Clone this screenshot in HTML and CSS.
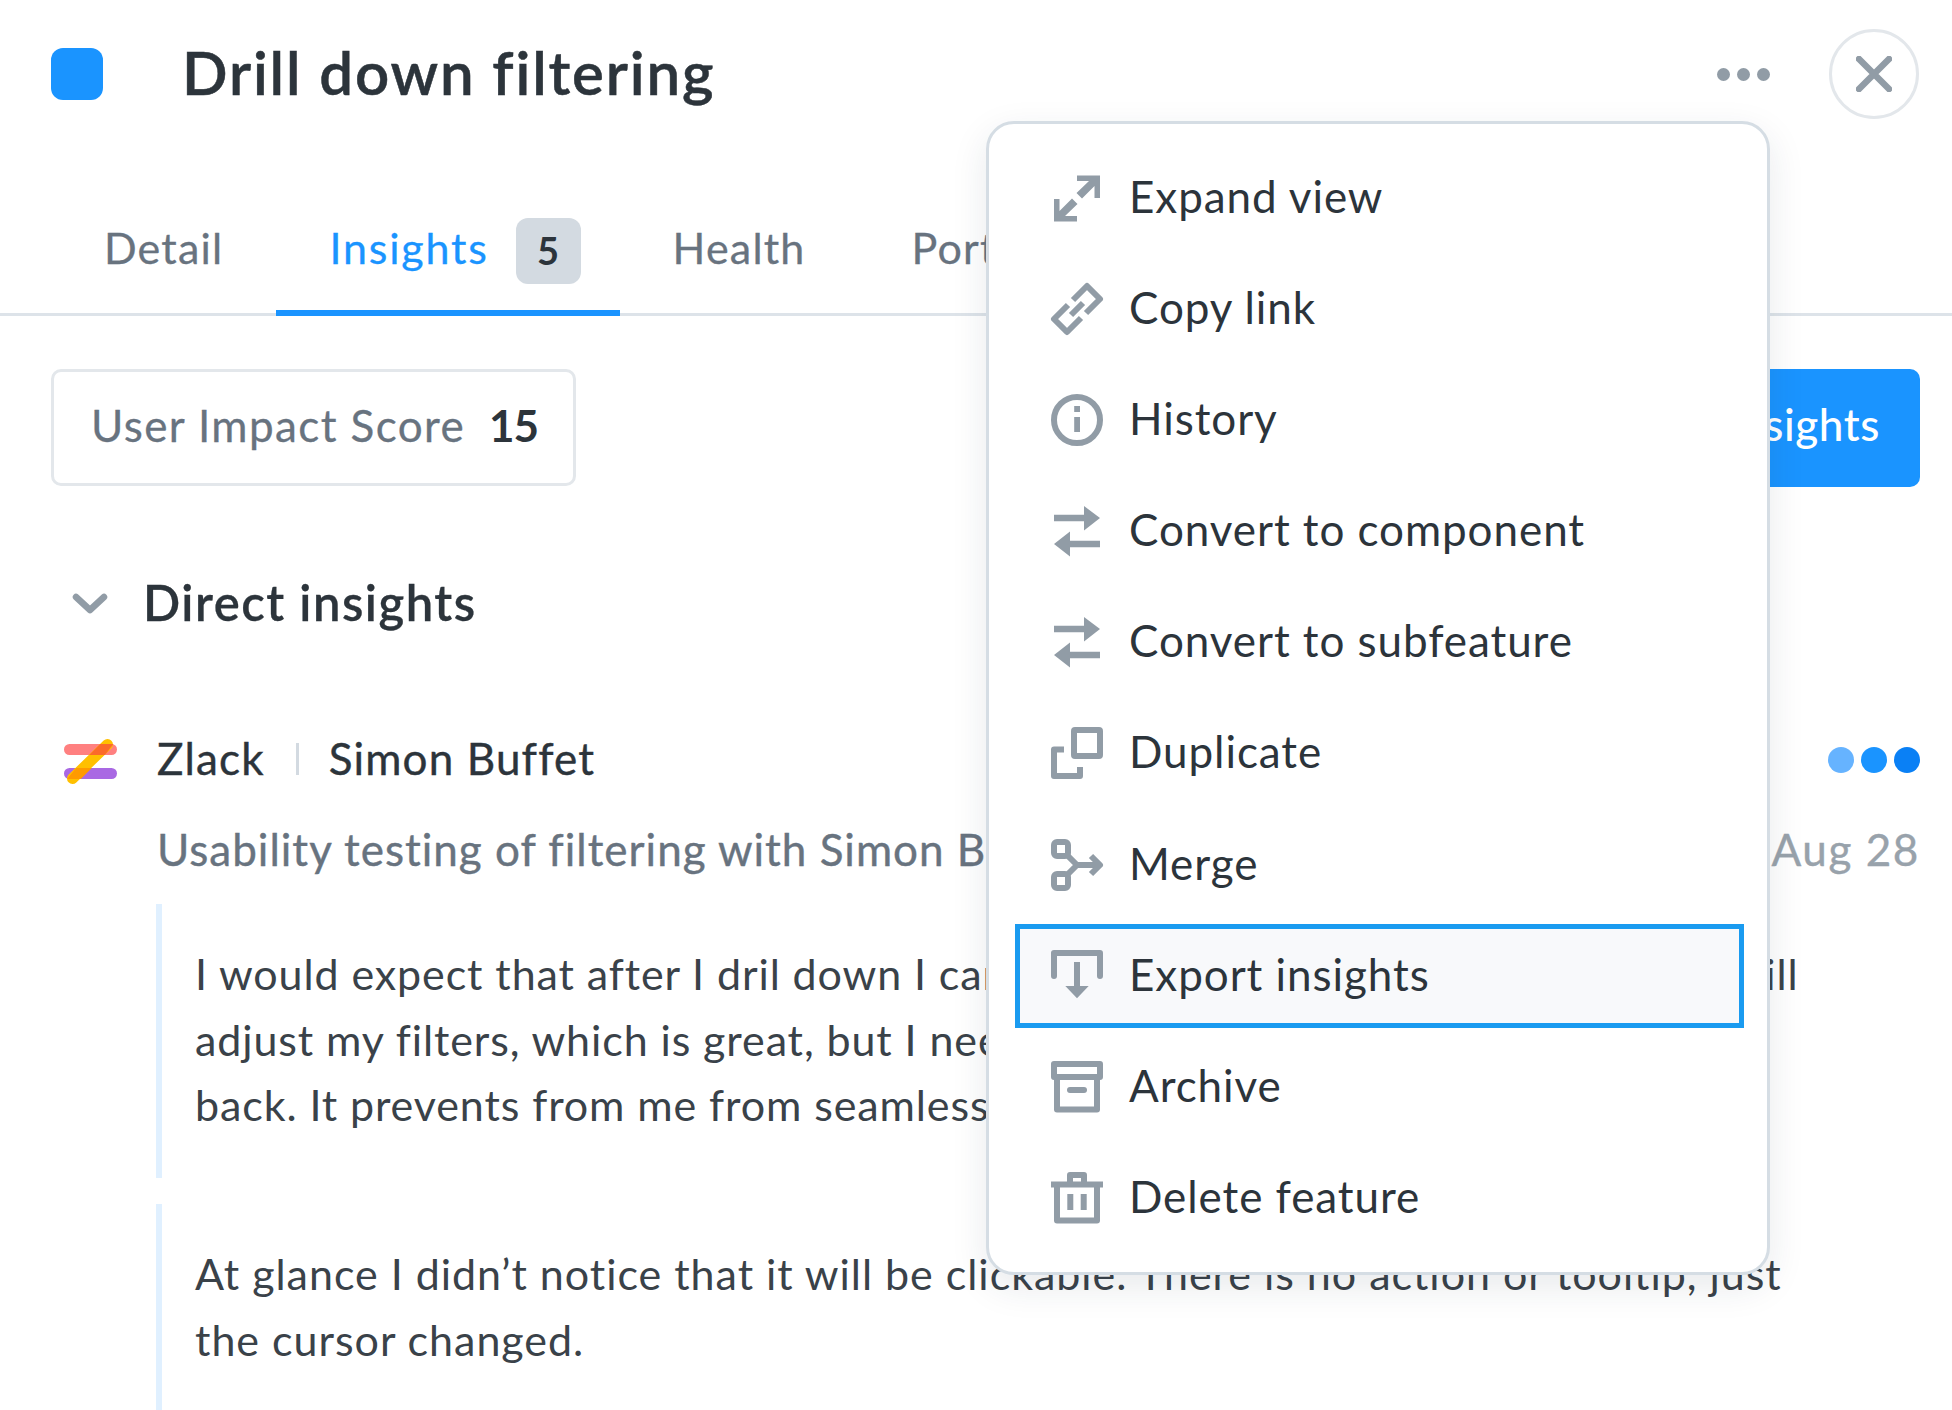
FILE: index.html
```html
<!DOCTYPE html>
<html lang="en">
<head>
<meta charset="utf-8">
<title>Drill down filtering</title>
<link rel="stylesheet" href="styles.css">
</head>
<body>
<div class="panel">
  <header class="head">
    <span class="swatch"></span>
    <h1 class="title">Drill down filtering</h1>
    <div class="head-actions">
      <span class="more"><i></i><i></i><i></i></span>
      <span class="close"><svg width="36" height="36" viewBox="0 0 36 36"><path d="M3 3L33 33M33 3L3 33" fill="none" stroke="#919ca6" stroke-width="6.5" stroke-linecap="round"/></svg></span>
    </div>
  </header>
  <nav class="tabs">
    <a class="tab"><span class="label">Detail</span></a>
    <a class="tab active"><span class="label">Insights</span> <span class="badge">5</span></a>
    <a class="tab"><span class="label">Health</span></a>
    <a class="tab"><span class="label">Portal</span></a>
  </nav>
  <div class="toolbar">
    <div class="score"><span>User Impact Score</span><b>15</b></div>
    <button class="primary">Add insights</button>
  </div>
  <div class="section">
    <svg class="chev" width="36" height="22" viewBox="0 0 36 22"><path d="M4 4L18 17L32 4" fill="none" stroke="#919ca6" stroke-width="6.5" stroke-linecap="round" stroke-linejoin="round"/></svg>
    <h2>Direct insights</h2>
  </div>
  <article class="insight">
    <div class="meta">
      <svg class="logo" width="54" height="48" viewBox="0 0 54 48">
        <rect x="0" y="5" width="53" height="11" rx="5.5" fill="#ff8080"/>
        <rect x="0" y="29" width="53" height="11" rx="5.5" fill="#a968e3"/>
        <path d="M8.5 39.5L43.5 5.5" stroke="#ffc000" stroke-width="11" stroke-linecap="round"/>
        <path d="M36.2 5H49.5L40.8 16H25.2Z" fill="#fb6a2a"/>
        <path d="M12.2 29H27.8L16.8 40H3Z" fill="#ff9a00"/>
      </svg>
      <span class="source">Zlack</span><span class="sep"></span><span class="source">Simon Buffet</span>
      <span class="level"><i class="l1"></i><i class="l2"></i><i class="l3"></i></span>
    </div>
    <div class="sub"><span>Usability testing of filtering with Simon Buffet</span><span class="date">Aug 28</span></div>
    <blockquote class="quote">I would expect that after I dril down I can see the details of the feature, and it will<br>adjust my filters, which is great, but I need a quick way to get<br>back. It prevents from me from seamlessly exploring the data.</blockquote>
    <blockquote class="quote">At glance I didn’t notice that it will be clickable. There is no action or tooltip, just<br>the cursor changed.</blockquote>
  </article>
</div>
<div class="menu">
  <a class="item"><svg class="ic" viewBox="0 0 52 52"><path d="M26 3.5H49V26H43.5V14L31 26.5L25.5 21L38 9H26Z"/><path d="M26 49.5H3V27H8.5V39L21 26.5L26.5 32L14 44H26Z"/></svg><span>Expand view</span></a>
  <a class="item"><svg class="ic st" viewBox="0 0 52 52"><path d="M22 17L36 3L49 16L35 30"/><path d="M30 35L16 49L3 36L17 22"/><path d="M20 32L32 20"/></svg><span>Copy link</span></a>
  <a class="item"><svg class="ic" viewBox="0 0 52 52"><circle cx="26" cy="26" r="23" fill="none" stroke="#919ca6" stroke-width="6"/><rect x="23.2" y="12" width="5.8" height="6"/><rect x="23.2" y="23" width="5.8" height="15"/></svg><span>History</span></a>
  <a class="item"><svg class="ic" viewBox="0 0 52 52"><path d="M3 9.7H33V1L49 13L33 25.5V16.3H3Z"/><path d="M49 35.7H19V26.5L3 39L19 51.5V42.3H49Z"/></svg><span>Convert to component</span></a>
  <a class="item"><svg class="ic" viewBox="0 0 52 52"><path d="M3 9.7H33V1L49 13L33 25.5V16.3H3Z"/><path d="M49 35.7H19V26.5L3 39L19 51.5V42.3H49Z"/></svg><span>Convert to subfeature</span></a>
  <a class="item"><svg class="ic st" viewBox="0 0 52 52"><rect x="23" y="3" width="26" height="26" rx="1"/><path d="M13 22.5H3V49H29V40"/></svg><span>Duplicate</span></a>
  <a class="item"><svg class="ic st" viewBox="0 0 52 52"><rect x="3" y="3" width="14" height="14" rx="3"/><rect x="3" y="35" width="14" height="14" rx="3"/><path d="M15 15L26 26H47M15 37L26 26"/><path d="M40 17L49 26L40 35"/></svg><span>Merge</span></a>
  <a class="item focus"><svg class="ic" viewBox="0 0 52 52"><path d="M3 26V3H49V26" fill="none" stroke="#919ca6" stroke-width="6" stroke-linecap="round" stroke-linejoin="round"/><path d="M23 12H29V36H37.7L26 48.3L14.3 36H23Z"/></svg><span>Export insights</span></a>
  <a class="item"><svg class="ic st" viewBox="0 0 52 52"><rect x="3" y="3" width="46" height="13"/><path d="M6 16V48.5H46V16"/><path d="M19 29H33" stroke-linecap="round"/></svg><span>Archive</span></a>
  <a class="item"><svg class="ic st" viewBox="0 0 52 52"><path d="M19 12V3H33V12"/><path d="M0 12.5H52"/><path d="M6 13V48.5H46V13"/><path d="M19.3 22V38M32.7 22V38"/></svg><span>Delete feature</span></a>
</div>
</body>
</html>
```
FILE: styles.css
```css
* { box-sizing: border-box; }
html, body { margin: 0; padding: 0; height: 100%; overflow: hidden; background: #fff; }
body { font-family: "Lato", "Open Sans", sans-serif; color: #2c343b; position: relative; }
.panel { width: 1952px; height: 1410px; overflow: hidden; }

.head { display: flex; align-items: center; height: 119px; padding: 29px 33px 0 51px; }
.swatch { width: 52px; height: 52px; border-radius: 12px; background: #1a94ff; margin-right: 79px; flex: none; }
.title { margin: 0 0 5px; font-size: 60px; font-weight: 600; letter-spacing: 1.85px; color: #2c343b; line-height: 1; -webkit-text-stroke: .5px #2c343b; }
.head-actions { margin-left: auto; display: flex; align-items: center; gap: 59px; }
.more { display: flex; gap: 7px; }
.more i { width: 13px; height: 13px; border-radius: 50%; background: #919ca6; display: block; }
.close { width: 90px; height: 90px; border-radius: 50%; border: 3px solid #e3e7eb; display: flex; align-items: center; justify-content: center; }

.tabs { display: flex; height: 197px; padding: 0 0 0 51px; border-bottom: 3px solid #dde3e9; align-items: flex-end; }
.tab { font-size: 43px; letter-spacing: 1.2px; color: #68737f; -webkit-text-stroke: .3px #68737f; height: 98px; padding: 0 53px 26px; display: flex; align-items: center; gap: 27px; margin-bottom: -3px; border-bottom: 6px solid transparent; white-space: nowrap; }
.label { padding-bottom: 7px; }
.tab.active { color: #1a94ff; letter-spacing: 1.8px; -webkit-text-stroke: .3px #1a94ff; border-bottom-color: #1a94ff; padding-right: 39px; }
.badge { width: 65px; height: 66px; padding-bottom: 3px; border-radius: 12px; background: #d3dae1; color: #2c343b; -webkit-text-stroke: 0; letter-spacing: 0; font-size: 38px; font-weight: 700; display: flex; align-items: center; justify-content: center; }

.toolbar { display: flex; justify-content: space-between; align-items: flex-start; padding: 53px 32px 0 51px; }
.score { height: 117px; width: 525px; border: 3px solid #e3e7eb; border-radius: 10px; display: flex; align-items: center; justify-content: space-between; padding: 0 35px 5px 37px; font-size: 44px; letter-spacing: 1.4px; color: #68737f; -webkit-text-stroke: .3px #68737f; }
.score b { color: #2c343b; -webkit-text-stroke: 0; font-weight: 700; letter-spacing: -1px; }
.primary { height: 118px; width: 420px; border: 0; border-radius: 10px; background: #1a94ff; color: #fff; font: 500 44px "Lato", sans-serif; letter-spacing: .6px; padding: 0 40px 9px; text-align: right; }

.section { display: flex; align-items: center; padding: 85px 0 0 72px; gap: 35px; }
.chev { margin-top: 3px; }
.section h2 { margin: 0; font-size: 49px; font-weight: 600; letter-spacing: 1.5px; line-height: 60px; color: #2c343b; -webkit-text-stroke: .3px #2c343b; }

.insight { padding: 0 32px 0 64px; margin-top: 103px; }
.meta { display: flex; align-items: center; height: 48px; font-size: 44px; letter-spacing: 1.15px; -webkit-text-stroke: .4px #2c343b; }
.source { padding-bottom: 2px; }
.logo { margin: 7px 39px 0 0; flex: none; }
.sep { width: 3px; height: 32px; background: #d3dae1; margin: 0 30px 0 31px; }
.level { margin: 2px 0 0 auto; display: flex; gap: 7px; }
.level i { width: 26px; height: 26px; border-radius: 50%; display: block; }
.l1 { background: #66b3ff; } .l2 { background: #1a94ff; } .l3 { background: #0a80f5; }
.sub { display: flex; justify-content: space-between; margin: 41px 0 0 93px; font-size: 44px; letter-spacing: 1px; line-height: 50px; color: #68737f; -webkit-text-stroke: .4px #68737f; }
.date { color: #98a2ab; -webkit-text-stroke: .4px #98a2ab; letter-spacing: 1.6px; }
.quote { margin: 30px 0 0 92px; border-left: 6px solid #e0f0ff; padding: 37px 0 40.5px 33px; font-size: 43px; letter-spacing: .9px; line-height: 65.5px; color: #3a4249; white-space: nowrap; }
.quote + .quote { margin-top: 26px; padding-bottom: 80px; letter-spacing: .97px; }

.menu { position: absolute; left: 986px; top: 121px; width: 784px; height: 1154px; background: #fff; border: 3px solid #d5dde4; border-radius: 28px; box-shadow: 0 12px 36px rgba(30, 50, 70, .10); padding: 21.5px 23px 0 26px; display: flex; flex-direction: column; gap: 7.2px; }
.item { height: 104px; border: 5px solid transparent; padding-left: 31px; display: flex; align-items: center; gap: 26px; font-size: 44px; letter-spacing: .93px; color: #2c343b; flex: none; }
.item span { padding-bottom: 4px; }
.item.focus { border-color: #1a9bf0; background: #f8f9fb; }
.ic { width: 52px; height: 52px; flex: none; fill: #919ca6; overflow: visible; }
.ic.st { fill: none; stroke: #919ca6; stroke-width: 6; stroke-linejoin: round; }
```
